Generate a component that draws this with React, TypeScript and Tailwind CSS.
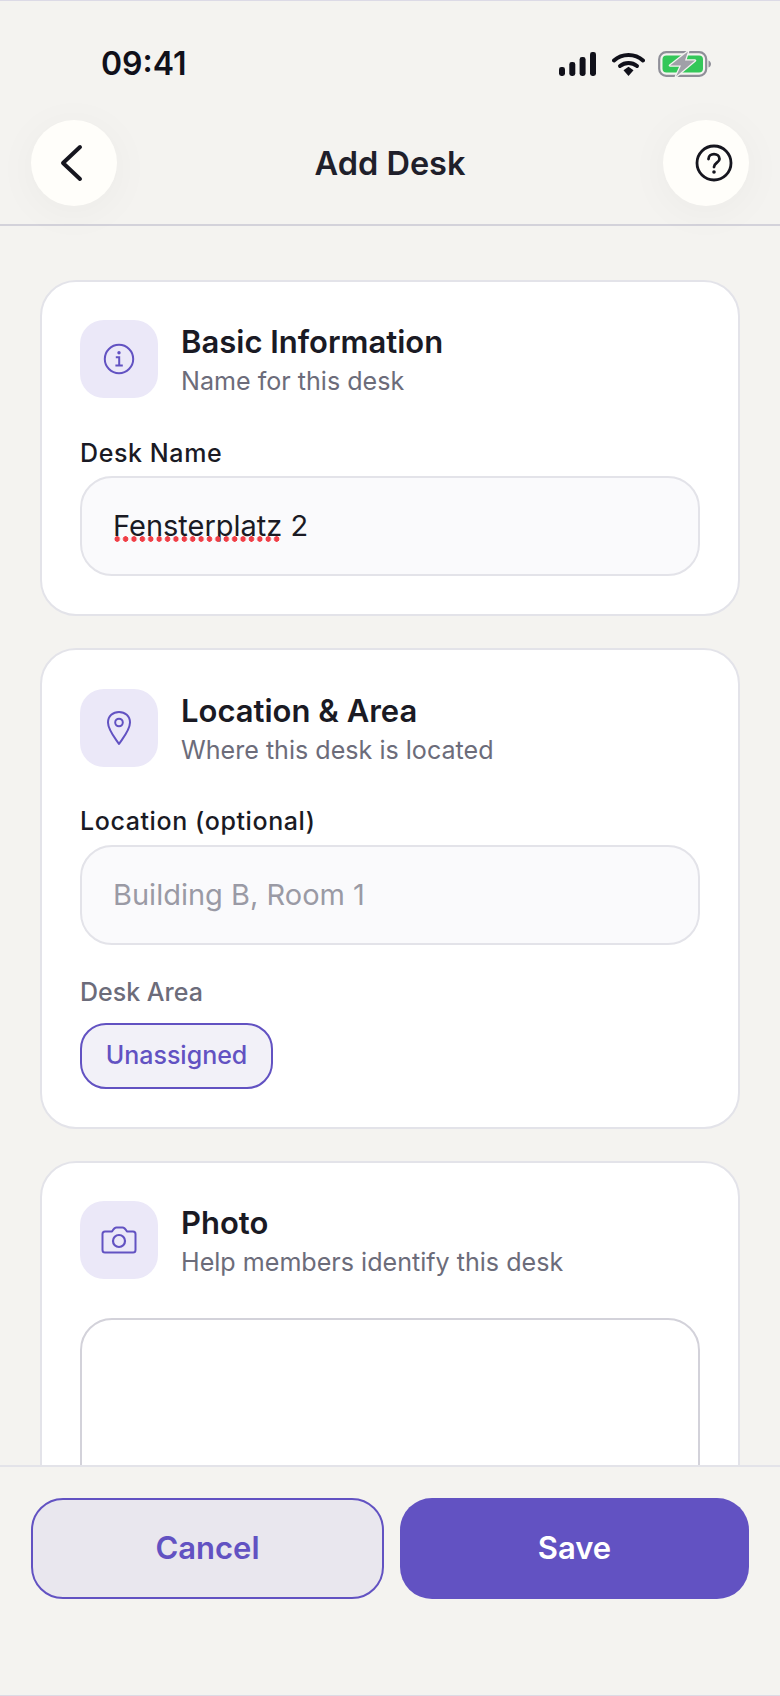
import React from "react";

function BackIcon() {
  return (
    <svg width="26" height="40" viewBox="0 0 26 40" fill="none" className="mr-[6px] block">
      <path d="M22 4 L5 20 L22 36" stroke="#16161f" strokeWidth="4" strokeLinecap="round" strokeLinejoin="round" />
    </svg>
  );
}

function HelpIcon() {
  return (
    <svg width="38" height="38" viewBox="0 0 38 38" fill="none" className="ml-[16px] block">
      <circle cx="19" cy="19" r="17" stroke="#16161f" strokeWidth="2.8" />
      <path d="M13.5 15 C13.5 8.5 24.5 8.5 24.5 15 C24.5 18.5 19 19 19 23" stroke="#16161f" strokeWidth="2.8" strokeLinecap="round" />
      <circle cx="19" cy="28" r="1.8" fill="#16161f" />
    </svg>
  );
}

function InfoIcon() {
  return (
    <svg width="32" height="32" viewBox="0 0 32 32" fill="none" className="block">
      <circle cx="16" cy="16" r="14.2" stroke="#6252c2" strokeWidth="2" />
      <circle cx="16" cy="9.8" r="1.7" fill="#6252c2" />
      <path d="M12.8 14.2 H16.2 V22.6 M12.4 22.6 H19.8" stroke="#6252c2" strokeWidth="2" />
    </svg>
  );
}

function PinIcon() {
  return (
    <svg width="26" height="36" viewBox="0 0 26 36" fill="none" className="block">
      <path d="M13 34 C9 28 2 20 2 12.5 C2 6 7 2 13 2 C19 2 24 6 24 12.5 C24 20 17 28 13 34 Z" stroke="#6252c2" strokeWidth="2" strokeLinejoin="round" />
      <circle cx="13" cy="12.5" r="3.8" stroke="#6252c2" strokeWidth="2" />
    </svg>
  );
}

function CameraIcon() {
  return (
    <svg width="36" height="28" viewBox="0 0 36 28" fill="none" className="block">
      <path d="M4 5.5 H11 C12.5 3 13.5 1.5 15.5 1.5 H21.5 C23.5 1.5 24.5 3 26 5.5 H32 C33.5 5.5 34.5 6.5 34.5 8 V24 C34.5 25.5 33.5 26.5 32 26.5 H4 C2.5 26.5 1.5 25.5 1.5 24 V8 C1.5 6.5 2.5 5.5 4 5.5 Z" stroke="#6252c2" strokeWidth="2" strokeLinejoin="round" />
      <circle cx="18" cy="15" r="6" stroke="#6252c2" strokeWidth="2.2" />
    </svg>
  );
}

function StatusIcons() {
  return (
    <div className="flex items-center">
      <svg width="37" height="24" viewBox="0 0 37 24" className="block">
        <rect x="0" y="15" width="6" height="9" rx="2.4" fill="#10101a" />
        <rect x="10.3" y="10" width="6" height="14" rx="2.4" fill="#10101a" />
        <rect x="20.6" y="5" width="6" height="19" rx="2.4" fill="#10101a" />
        <rect x="31" y="0" width="6" height="24" rx="2.4" fill="#10101a" />
      </svg>
      <svg width="33" height="24" viewBox="0 0 33 24" fill="none" className="ml-[16px] block">
        <path d="M2 8.5 C10 1 23 1 31 8.5" stroke="#10101a" strokeWidth="4" strokeLinecap="round" />
        <path d="M8 14 C13 10 20 10 25 14" stroke="#10101a" strokeWidth="4" strokeLinecap="round" />
        <path d="M11.5 18.2 L16.5 14.8 L21.5 18.2 L16.5 24 Z" fill="#10101a" />
      </svg>
      <svg width="54" height="26" viewBox="0 0 54 26" fill="none" className="ml-[13px] block">
        <rect x="1.2" y="1.2" width="47" height="23.6" rx="7" stroke="#8f8f98" strokeWidth="2.2" />
        <rect x="4.5" y="4.5" width="40.5" height="17" rx="4" fill="#34c759" />
        <path d="M50.5 9.5 C52 10 53 11.5 53 13 C53 14.5 52 16 50.5 16.5 Z" fill="#8f8f98" />
        <path d="M30 0.5 L12 14.5 H23 L18 25.5 L37 9.5 H27 Z" fill="#a0a0a8" stroke="#f4f3f0" strokeWidth="2.5" paintOrder="stroke" strokeLinejoin="round" />
      </svg>
    </div>
  );
}

function CardHead({ icon, title, sub }: { icon: React.ReactNode; title: string; sub: string }) {
  return (
    <div className="flex items-start gap-[23px]">
      <div className="flex h-[78px] w-[78px] shrink-0 items-center justify-center rounded-[24px] bg-[#ebe8f8]">{icon}</div>
      <div className="flex flex-col pt-[3px]">
        <div className="text-[31px] font-semibold leading-[38px] text-[#1a1a24]">{title}</div>
        <div className="mt-[3px] text-[25.1px] leading-[34px] text-[#6c6c7a]">{sub}</div>
      </div>
    </div>
  );
}

function Card({ children }: { children: React.ReactNode }) {
  return <section className="flex shrink-0 flex-col rounded-[36px] border-2 border-[#e3e3e9] bg-white p-[38px]">{children}</section>;
}

export default function App() {
  return (
    <div
      className="flex h-[1696px] w-[780px] flex-col overflow-hidden border-y border-[#dcdae6] bg-[#f4f3f0]"
      style={{ fontFamily: "Inter, 'Liberation Sans', sans-serif" }}
    >
      <header className="relative z-10 flex h-[225px] shrink-0 flex-col border-b-2 border-[#d3d2da]">
        <div className="mt-[38px] flex h-[50px] items-center justify-between pl-[101px] pr-[68px]">
          <span className="text-[32px] font-semibold leading-[40px] text-[#10101a]">09:41</span>
          <StatusIcons />
        </div>
        <div className="mt-[31px] flex items-center justify-between px-[31px]">
          <button className="flex h-[86px] w-[86px] items-center justify-center rounded-full bg-[#fffefa] shadow-[0_6px_44px_rgba(0,0,0,0.04)]">
            <BackIcon />
          </button>
          <h1 className="pt-[2px] text-[32.5px] font-semibold text-[#1f1f2b]">Add Desk</h1>
          <button className="flex h-[86px] w-[86px] items-center justify-center rounded-full bg-[#fffefa] shadow-[0_6px_44px_rgba(0,0,0,0.04)]">
            <HelpIcon />
          </button>
        </div>
      </header>

      <main className="flex min-h-0 flex-1 flex-col gap-[32px] overflow-hidden px-[40px] pt-[54px]">
        <Card>
          <CardHead icon={<InfoIcon />} title="Basic Information" sub="Name for this desk" />
          <label className="mt-[37px] text-[25px] font-medium leading-[36px] tracking-[0.6px] text-[#1a1a24]">Desk Name</label>
          <div className="relative mt-[5px] flex h-[100px] items-center rounded-[32px] border-2 border-[#e3e3e9] bg-[#fafafc] px-[31px]">
            <input readOnly defaultValue="Fensterplatz 2" className="w-full bg-transparent text-[29px] text-[#1a1a24] outline-none" />
            <span className="absolute left-[31px] top-[58px] h-[6px] w-[168px] bg-[radial-gradient(circle,#f03e46_2.5px,transparent_3px)] bg-[length:8.4px_6px]" />
          </div>
        </Card>

        <Card>
          <div className="mt-px">
            <CardHead icon={<PinIcon />} title="Location & Area" sub="Where this desk is located" />
          </div>
          <label className="mt-[36px] text-[25px] font-medium leading-[36px] tracking-[0.6px] text-[#1a1a24]">Location (optional)</label>
          <div className="mt-[6px] flex h-[100px] items-center rounded-[32px] border-2 border-[#e3e3e9] bg-[#fafafc] px-[31px]">
            <input readOnly placeholder="Building B, Room 1" className="w-full bg-transparent text-[29px] outline-none placeholder:text-[#9a9aa5]" />
          </div>
          <div className="mt-[29px] text-[25px] font-medium leading-[36px] text-[#6c6c7a]">Desk Area</div>
          <div className="mt-[13px] flex">
            <button className="flex h-[66px] w-[193px] items-center justify-center rounded-[26px] border-2 border-[#6252c2] bg-[#f2f1f8] text-[25px] font-medium text-[#6252c2]">
              Unassigned
            </button>
          </div>
        </Card>

        <Card>
          <CardHead icon={<CameraIcon />} title="Photo" sub="Help members identify this desk" />
          <div className="mt-[39px] h-[300px] shrink-0 rounded-[32px] border-2 border-[#d3d2da] bg-white" />
        </Card>
      </main>

      <footer className="z-10 flex h-[230px] shrink-0 gap-[16px] border-t-2 border-[#e3e3e9] bg-[#f4f3f0] pl-[31px] pr-[31px] pt-[31px]">
        <button className="h-[101px] w-[353px] rounded-[32px] border-2 border-[#6252c2] bg-[#e9e7ee] text-[31px] font-semibold text-[#6252c2]">Cancel</button>
        <button className="h-[101px] w-[349px] rounded-[32px] bg-[#6252c2] text-[31px] font-semibold text-white">Save</button>
      </footer>
    </div>
  );
}
